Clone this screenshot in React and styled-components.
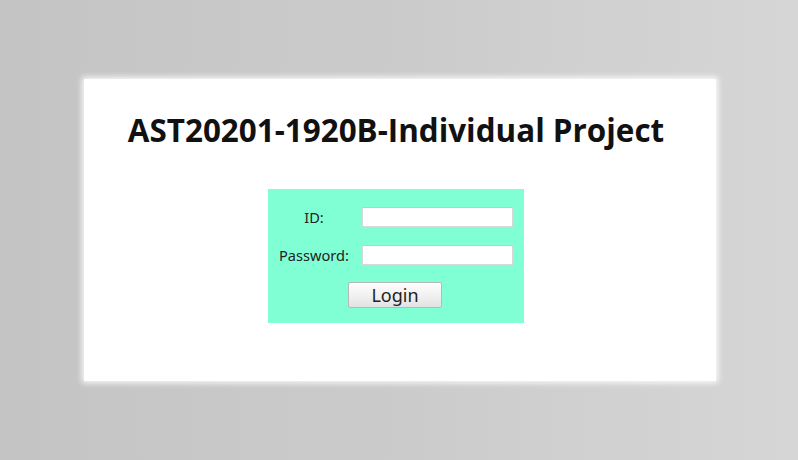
import React from "react";
import styled, { createGlobalStyle } from "styled-components";

const Global = createGlobalStyle`
  html, body { margin: 0; padding: 0; }
  body {
    width: 798px;
    height: 460px;
    overflow: hidden;
    background: linear-gradient(90deg, #c4c4c4 0%, #cbcbcb 50%, #d6d6d6 100%);
    font-family: "Open Sans", "Noto Sans", sans-serif;
  }
`;

const Page = styled.div`
  padding: 79px 0 0 84px;
`;

const Card = styled.div`
  width: 632px;
  height: 302px;
  background: #ffffff;
  box-shadow: 0 0 6px 2px rgba(255, 255, 255, 0.9);
  box-sizing: border-box;
  padding: 32px 8px 0 0;
  display: flex;
  flex-direction: column;
  align-items: center;
`;

const Title = styled.h1`
  margin: 0;
  font-family: "Open Sans", sans-serif;
  font-weight: 700;
  font-size: 31.4px;
  line-height: 38px;
  color: #111;
  letter-spacing: 0;
`;

const FormBox = styled.form`
  margin-top: 40px;
  width: 256px;
  box-sizing: border-box;
  background: #80ffd4;
  padding: 18px 11px 15px 4px;
  display: grid;
  grid-template-columns: 84px 151px;
  column-gap: 6px;
  row-gap: 18px;
  align-items: center;
`;

const Label = styled.label`
  text-align: center;
  font-family: "Noto Sans", sans-serif;
  font-size: 14.6px;
  line-height: 20px;
  color: #222;
`;

const Field = styled.input`
  width: 151px;
  height: 20px;
  box-sizing: border-box;
  border: 1px solid #d8d8d8;
  border-top-color: #c8c8c8;
  background: #fff;
  margin: 0;
  padding: 0 3px;
  outline: none;
`;

const Button = styled.button`
  grid-column: 1 / -1;
  justify-self: center;
  margin: -1px 0 0 5px;
  width: 94px;
  height: 26px;
  box-sizing: border-box;
  border: 1px solid #b8b8b8;
  border-radius: 2px;
  background: linear-gradient(180deg, #fdfdfd 0%, #f0f0f0 55%, #e2e2e2 100%);
  font-family: "Noto Sans", sans-serif;
  font-size: 18px;
  line-height: 22px;
  color: #222;
  padding: 0;
`;

export default function App() {
  return (
    <>
      <Global />
      <Page>
        <Card>
          <Title>AST20201-1920B-Individual Project</Title>
          <FormBox onSubmit={(e) => e.preventDefault()}>
            <Label htmlFor="id">ID:</Label>
            <Field id="id" type="text" />
            <Label htmlFor="pw">Password:</Label>
            <Field id="pw" type="password" />
            <Button type="submit">Login</Button>
          </FormBox>
        </Card>
      </Page>
    </>
  );
}
